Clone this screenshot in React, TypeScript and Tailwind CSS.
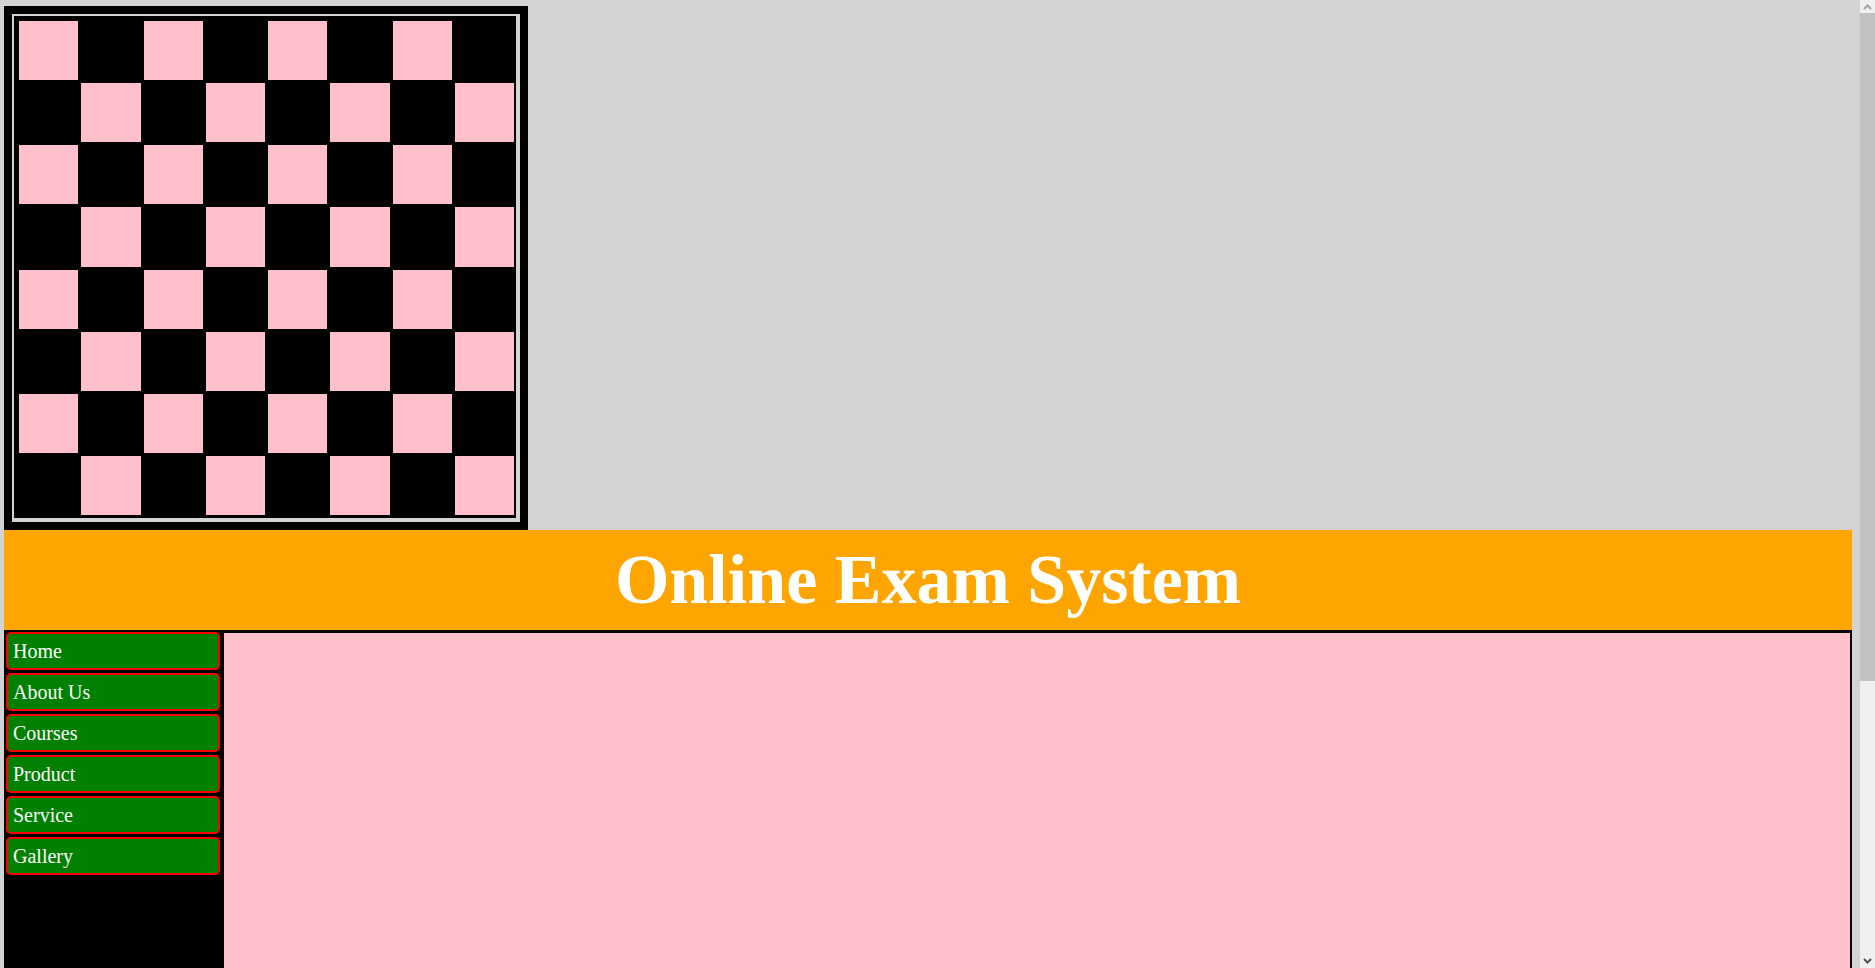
const links = ["Home", "About Us", "Courses", "Product", "Service", "Gallery"];

function Board() {
    const cells = [];
    for (let r = 0; r < 8; r++) {
        for (let c = 0; c < 8; c++) {
            cells.push(
                <div key={`${r}-${c}`} className={(r + c) % 2 === 0 ? "bg-[#ffc0cb]" : "bg-black"} />
            );
        }
    }
    return (
        <div className="w-[524px] h-[524px] bg-black p-[8px]">
            <div className="w-full h-full border-[#d3d3d3] border-t-[2px] border-l-[2px] border-r-[4px] border-b-[4px]">
                <div className="w-full h-full bg-black pt-[5px] pl-[5px] pr-[2px] pb-[3px]">
                    <div className="grid grid-cols-8 grid-rows-8 gap-[3px] w-full h-full">{cells}</div>
                </div>
            </div>
        </div>
    );
}

function Scrollbar() {
    return (
        <div className="fixed top-0 right-0 w-[15px] h-screen bg-[#f0f0f0] flex flex-col">
            <div className="h-[13px] flex items-center justify-center">
                <svg width="9" height="6" viewBox="0 0 9 6">
                    <path d="M1 5 L4.5 1.5 L8 5" stroke="#a3a3a3" strokeWidth="2" fill="none" />
                </svg>
            </div>
            <div className="h-[668px] bg-[#c1c1c1]" />
            <div className="flex-1" />
            <div className="h-[15px] flex items-center justify-center">
                <svg width="9" height="6" viewBox="0 0 9 6">
                    <path d="M1 1 L4.5 4.5 L8 1" stroke="#505050" strokeWidth="2" fill="none" />
                </svg>
            </div>
        </div>
    );
}

export default function App() {
    return (
        <div className="min-h-screen bg-[#d3d3d3] pl-[4px] pr-[23px] pt-[6px] pb-[8px] font-['Liberation_Serif',serif]">
            <Board />
            <div className="h-[100px] bg-[#ffa500] flex items-center justify-center">
                <h1 className="text-[70px] font-bold text-white leading-none">Online Exam System</h1>
            </div>
            <div className="flex h-[722px]">
                <div className="w-[220px] bg-black pl-[2px] pr-[4px] pt-[2px] flex flex-col gap-[3px]">
                    {links.map((l) => (
                        <a
                            key={l}
                            href="#"
                            className="h-[38px] flex items-center px-[5px] bg-[#008000] border-2 border-[#ff0000] rounded-[5px] text-white text-[20px]"
                        >
                            {l}
                        </a>
                    ))}
                </div>
                <div className="flex-1 bg-[#ffc0cb] border-t-[3px] border-r-[2px] border-black" />
            </div>
            <Scrollbar />
        </div>
    );
}
